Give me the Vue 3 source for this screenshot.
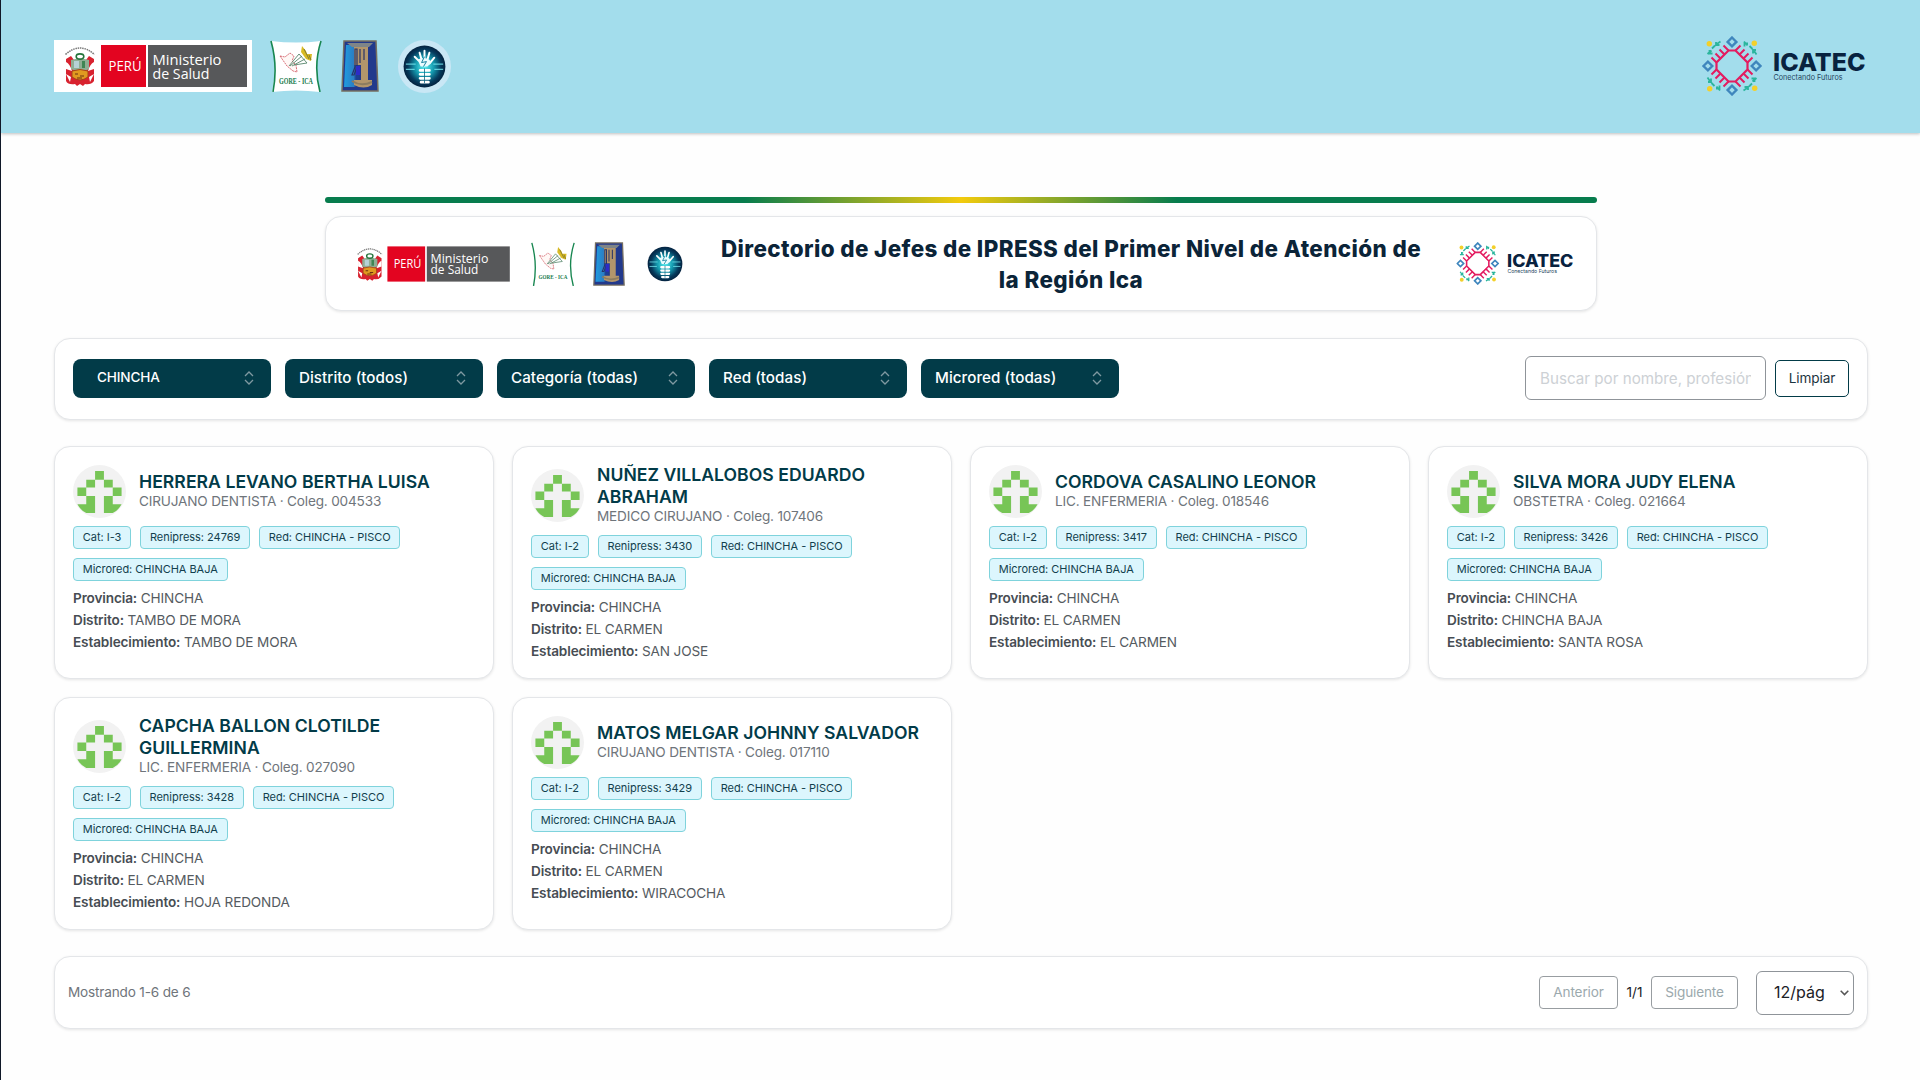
<script setup>
const filters = ['CHINCHA', 'Distrito (todos)', 'Categoría (todas)', 'Red (todas)', 'Microred (todas)']

const people = [
  { name: 'HERRERA LEVANO BERTHA LUISA', job: 'CIRUJANO DENTISTA', coleg: '004533', cat: 'I-3', code: '24769', district: 'TAMBO DE MORA', place: 'TAMBO DE MORA' },
  { name: 'NUÑEZ VILLALOBOS EDUARDO ABRAHAM', job: 'MEDICO CIRUJANO', coleg: '107406', cat: 'I-2', code: '3430', district: 'EL CARMEN', place: 'SAN JOSE' },
  { name: 'CORDOVA CASALINO LEONOR', job: 'LIC. ENFERMERIA', coleg: '018546', cat: 'I-2', code: '3417', district: 'EL CARMEN', place: 'EL CARMEN' },
  { name: 'SILVA MORA JUDY ELENA', job: 'OBSTETRA', coleg: '021664', cat: 'I-2', code: '3426', district: 'CHINCHA BAJA', place: 'SANTA ROSA' },
  { name: 'CAPCHA BALLON CLOTILDE GUILLERMINA', job: 'LIC. ENFERMERIA', coleg: '027090', cat: 'I-2', code: '3428', district: 'EL CARMEN', place: 'HOJA REDONDA' },
  { name: 'MATOS MELGAR JOHNNY SALVADOR', job: 'CIRUJANO DENTISTA', coleg: '017110', cat: 'I-2', code: '3429', district: 'EL CARMEN', place: 'WIRACOCHA' },
]

const quarters = [0, 90, 180, 270]
</script>

<template>
  <div class="page">
    <svg class="defs" width="0" height="0" aria-hidden="true">
      <defs>
        <linearGradient id="tumiSide" x1="0" x2="1"><stop offset="0" stop-color="#1f9be0" /><stop offset=".6" stop-color="#2b7fc4" /><stop offset=".75" stop-color="#1d3f94" /></linearGradient>
        <radialGradient id="handGlow" cx=".5" cy=".5" r=".5"><stop offset="0" stop-color="#5ff0f2" /><stop offset=".45" stop-color="#159bb0" /><stop offset=".8" stop-color="#063a5c" /><stop offset="1" stop-color="#04223f" /></radialGradient>
      </defs>

      <symbol id="minsa" viewBox="0 0 198 52">
        <rect width="198" height="52" fill="#fff" />
        <path d="M11.500 14.500Q26 1.500 40.500 14.500" fill="none" stroke="#777" stroke-width="1.500" stroke-dasharray="1.500 .8" />
        <path d="M12 19l5-3 3 4h12l3-4 5 3v22q-3 4-9 3l-2 2-3-2-3 2-2-2q-7 1-9-3z" fill="#d8222f" />
        <path d="M12 22q4 2 6 9l-6-2zM40 22q-4 2-6 9l6-2zM12 34l5 3-1 5zM40 34l-5 3 1 5z" fill="#fff" />
        <path d="M17 20q9-3 18 0v9q-9 5-18 0z" fill="#8fae94" />
        <path d="M20 21h5v7h-5z" fill="#b6d2d6" />
        <path d="M28 21h3v7h-3z" fill="#3f8553" />
        <ellipse cx="26" cy="16.500" rx="3.800" ry="2.600" fill="#fff" stroke="#23743a" stroke-width="1.600" />
        <path d="M18 31q8-3 16 0v6q-8 6-16 0z" fill="#e09a20" stroke="#a8421a" />
        <path d="M21 34h3m2 2h4m-7 2h5" stroke="#6a3210" stroke-width="1.200" />
        <rect x="47" y="5" width="45" height="42" fill="#e30420" />
        <rect x="94" y="5" width="99" height="42" fill="#57585a" />
      </symbol>

      <symbol id="gore" viewBox="0 0 52 52">
        <path d="M1 1Q26 4 51 1Q43 26 50 52Q26 49 2 52Q8 26 1 1z" fill="#fff" />
        <path d="M1 1Q8 26 3 52M51 1Q43 26 50 52" fill="none" stroke="#178650" stroke-width="1.600" />
        <path d="M10 16l5 1 5-4 4 3-2 5 4 4 1 7-4-1-6-5z" fill="#fff8f6" stroke="#d4606a" stroke-width=".9" stroke-dasharray="2 .7" />
        <path d="M19 26l10-12 8 9-13 2M20 26l12-10M22 26l13-7" fill="none" stroke="#55856a" stroke-width=".9" />
        <path d="M31 12l1-6 4 5 1 3 5 0-1 7-5-2z" fill="#d9bb25" />
        <path d="M34 9l5 10M39 15l2 5" stroke="#77722d" stroke-width=".9" />
      </symbol>

      <symbol id="tumi" viewBox="0 0 38 52">
        <path d="M3 1h32l2 50H1z" fill="#22398c" stroke="#776f60" stroke-width="1.500" />
        <path d="M5 5h14l-1 42H3z" fill="url(#tumiSide)" />
        <path d="M6 3h26l-4 4H11z" fill="#7f8588" />
        <path d="M13 7h14v33h4v5q-8 5-18 0v-5h7V25h-7z" fill="#b3966b" />
        <path d="M14 9h2v18l-3 8h-2l3-8zM19 9v14M23 9v11" fill="none" stroke="#283467" stroke-width="1.200" />
        <path d="M15 26h4v9h-4z" fill="#2d2bc7" />
        <path d="M11 41q9 6 20 1" fill="none" stroke="#8c7c60" stroke-width="2" />
      </symbol>

      <symbol id="hand" viewBox="0 0 54 54">
        <circle cx="27" cy="27" r="21.300" fill="url(#handGlow)" />
        <path d="M8 24.500h10m18 0h10M8 30h9m20 0h9" stroke="#75e5ee" stroke-width="1.200" opacity=".8" />
        <path d="M21 21l-4-4M24 20l-2-7M27 20V11M30 20l2-7M32 24l5-6" fill="none" stroke="#fff" stroke-width="2" stroke-linecap="round" />
        <path d="M20 20q6-3 12 0l2 3-4 4h-7z" fill="#eafcff" />
        <path d="M27 17l-3 6 5-1-3 5" fill="none" stroke="#127f9d" />
        <path d="M22.500 31h9.500M22.500 35h9.500M22.500 39h9.500M23.500 43h7.500" stroke="#fff" stroke-width="2.800" stroke-linecap="round" />
        <path d="M27 29v15" stroke="#0b6381" stroke-width=".8" />
      </symbol>

      <symbol id="rosette" viewBox="0 0 60 60">
        <path d="M26.500 14.500h7l12 12v7l-12 12h-7l-12-12v-7z" fill="none" stroke="#e31c60" stroke-width="2.200" />
        <g v-for="q in quarters" :key="q" :transform="`rotate(${q} 30 30)`">
          <path d="M26.500 14.500l-5-5M22.500 18.500l-5-5M18.500 22.500l-5-5M14.500 26.500l-5-5" fill="none" stroke="#e31c60" stroke-width="2" />
          <path d="M30 1.500l4.400 4.400-4.400 4.400-4.400-4.400z" fill="none" stroke="#3f86bd" stroke-width="2.400" />
          <path d="M5.500 18l4-3.500M10 12.500l3-3M14 8.500L18.500 5.500M7.500 14v3.500h3M14 6v3h3.500" fill="none" stroke="#2bb59d" stroke-width="1.800" />
          <circle cx="7.300" cy="7.700" r="2.700" fill="#f3d02b" />
        </g>
      </symbol>

      <symbol id="identicon" viewBox="0 0 54 54">
        <circle cx="27" cy="27" r="27" fill="#f2f2f2" />
        <path d="M22.500 6h9v9h-9zM13.500 15h9v8h-9zM31.500 15h9v8h-9zM4.500 23h9v8.500h-9zM40.500 23h9v8.500h-9zM13.500 31.500h9V49h-9q-6-3-9-9h9zM31.500 31.500h9V40h9q-3 6-9 9h-9z" fill="#77c556" />
      </symbol>
    </svg>

    <header class="topbar">
      <div class="logos">
        <svg class="l-minsa" viewBox="0 0 198 52">
          <use href="#minsa" />
          <text class="sans" x="54.500" y="31" textLength="33" lengthAdjust="spacingAndGlyphs">PERÚ</text>
          <text class="sans" x="98.500" y="25" textLength="69" lengthAdjust="spacingAndGlyphs">Ministerio</text>
          <text class="sans" x="98.500" y="38.500" textLength="57" lengthAdjust="spacingAndGlyphs">de Salud</text>
        </svg>
        <svg class="l-gore" viewBox="0 0 52 52">
          <use href="#gore" />
          <text class="gore-name" x="9" y="43.500" textLength="34" lengthAdjust="spacingAndGlyphs">GORE - ICA</text>
        </svg>
        <svg class="l-tumi"><use href="#tumi" /></svg>
        <svg class="l-hand"><use href="#hand" /></svg>
      </div>
      <svg class="l-icatec" viewBox="0 0 164 60">
        <use href="#rosette" width="60" height="60" />
        <text class="brand" x="71" y="34.500" textLength="92.500" lengthAdjust="spacingAndGlyphs">ICATEC</text>
        <text class="tagline" x="71.500" y="43.700" textLength="69" lengthAdjust="spacingAndGlyphs">Conectando Futuros</text>
      </svg>
    </header>

    <main>
      <div class="stripe"></div>
      <section class="panel banner">
        <div class="logos small">
          <svg class="l-minsa" viewBox="0 0 198 52">
            <use href="#minsa" />
            <text class="sans" x="54.500" y="31" textLength="33" lengthAdjust="spacingAndGlyphs">PERÚ</text>
            <text class="sans" x="98.500" y="25" textLength="69" lengthAdjust="spacingAndGlyphs">Ministerio</text>
            <text class="sans" x="98.500" y="38.500" textLength="57" lengthAdjust="spacingAndGlyphs">de Salud</text>
          </svg>
          <svg class="l-gore" viewBox="0 0 52 52">
            <use href="#gore" />
            <text class="gore-name" x="9" y="43.500" textLength="34" lengthAdjust="spacingAndGlyphs">GORE - ICA</text>
          </svg>
          <svg class="l-tumi"><use href="#tumi" /></svg>
          <svg class="l-hand"><use href="#hand" /></svg>
        </div>
        <h1>Directorio de Jefes de IPRESS del Primer Nivel de Atención de la Región Ica</h1>
        <svg class="l-icatec" viewBox="0 0 164 60">
          <use href="#rosette" width="60" height="60" />
          <text class="brand" x="71" y="34.500" textLength="92.500" lengthAdjust="spacingAndGlyphs">ICATEC</text>
          <text class="tagline" x="71.500" y="43.700" textLength="69" lengthAdjust="spacingAndGlyphs">Conectando Futuros</text>
        </svg>
      </section>

      <section class="panel filters">
        <div class="selects">
          <button v-for="(f, i) in filters" :key="f" class="select" :class="{ chosen: i === 0 }">
            <span>{{ f }}</span>
            <svg width="10" height="14" viewBox="0 0 10 14" fill="none" stroke="#7f99a1" stroke-width="1.300"><path d="M1 5l4-4 4 4M1 9l4 4 4-4" /></svg>
          </button>
        </div>
        <div class="search">
          <input type="text" placeholder="Buscar por nombre, profesión…" />
          <button class="clear">Limpiar</button>
        </div>
      </section>

      <section class="grid">
        <article v-for="p in people" :key="p.name" class="panel card">
          <div class="head">
            <svg class="avatar"><use href="#identicon" /></svg>
            <div class="who">
              <h2>{{ p.name }}</h2>
              <div class="job">{{ p.job }} · Coleg. {{ p.coleg }}</div>
            </div>
          </div>
          <div class="badges">
            <span>Cat: {{ p.cat }}</span>
            <span>Renipress: {{ p.code }}</span>
            <span>Red: CHINCHA - PISCO</span>
            <span>Microred: CHINCHA BAJA</span>
          </div>
          <div class="facts">
            <div><b>Provincia:</b> CHINCHA</div>
            <div><b>Distrito:</b> {{ p.district }}</div>
            <div><b>Establecimiento:</b> {{ p.place }}</div>
          </div>
        </article>
      </section>

      <footer class="panel pager">
        <span class="count">Mostrando 1-6 de 6</span>
        <div class="controls">
          <button class="step prev">Anterior</button>
          <span class="pos">1/1</span>
          <button class="step next">Siguiente</button>
          <button class="size">
            <span>12/pág</span>
            <svg width="9" height="6" viewBox="0 0 9 6" fill="none" stroke="#555" stroke-width="1.500"><path d="M.7.8l3.800 3.800L8.300.8" /></svg>
          </button>
        </div>
      </footer>
    </main>
  </div>
</template>

<style>
body { background: #fefefe; }
</style>

<style scoped>
* { box-sizing: border-box; }
.page {
  width: 1920px;
  height: 1080px;
  overflow: hidden;
  border-left: 1px solid #101828;
  background: #fefefe;
  font-family: Inter, "Liberation Sans", sans-serif;
  color: #1b2126;
}
.defs { display: block; position: absolute; }
svg { display: block; flex: none; }
button, input { font-family: inherit; margin: 0; }
.sans { font-family: "Open Sans", sans-serif; font-size: 15px; fill: #fff; }
.gore-name { font-family: "Liberation Serif", serif; font-weight: 700; font-size: 7.500px; fill: #167a4b; }
.brand { font-weight: 800; font-size: 24px; fill: #08223f; }
.tagline { font-size: 7.500px; fill: #234560; }
.topbar {
  height: 133px;
  padding: 0 53px 1px;
  display: flex;
  justify-content: space-between;
  align-items: center;
  background: #a3ddec;
  box-shadow: 0 1px 3px rgba(0, 0, 0, .25);
}
.logos { display: flex; align-items: center; gap: 19px; }
.l-minsa { width: 198px; height: 52px; }
.l-gore { width: 52px; height: 52px; margin-left: -1px; }
.l-tumi { width: 38px; height: 52px; }
.l-hand { width: 53px; height: 53px; border-radius: 50%; background: #c9e7f5; }
.topbar .l-icatec { width: 164px; height: 60px; margin-right: 1px; }

.small { gap: 18px; }
.small .l-minsa { width: 166px; height: 44px; }
.small .l-gore { width: 44px; height: 44px; }
.small .l-tumi { width: 32px; height: 44px; }
.small .l-hand { width: 44px; height: 44px; background: none; }

main { padding: 64px 52px 0 53px; }
.stripe {
  width: 1272px;
  height: 6px;
  margin: 0 auto;
  border-radius: 3px;
  background: linear-gradient(90deg, #077c4d 0%, #077c4d 33%, #f3cb0d 50%, #077c4d 67%, #077c4d 100%);
}
.panel {
  background: #fff;
  border: 1px solid #e4e6e9;
  border-radius: 16px;
  box-shadow: 0 1px 3px rgba(0, 0, 0, .1);
}
.banner {
  width: 1272px;
  height: 95px;
  margin: 13px auto 0;
  padding: 0 22px;
  display: flex;
  align-items: center;
}
.banner h1 {
  flex: 1;
  margin: 0;
  padding: 0 28px 0 27px;
  text-align: center;
  font-size: 22.400px;
  line-height: 31px;
  letter-spacing: .4px;
  font-weight: 800;
  color: #0b2438;
}
.banner .l-icatec { width: 118px; height: 43px; }

.filters {
  height: 82px;
  margin-top: 27px;
  padding: 0 18px 2px;
  display: flex;
  align-items: center;
  justify-content: space-between;
}
.selects { display: flex; gap: 14px; }
.select {
  width: 198px;
  height: 39px;
  padding: 0 17px 0 14px;
  display: flex;
  align-items: center;
  justify-content: space-between;
  border: 0;
  border-radius: 8px;
  background: #023b48;
  color: #fff;
  font-size: 15.200px;
  letter-spacing: .04px;
  font-weight: 500;
}
.select span { padding-bottom: 2px; }
.select.chosen { padding-left: 24px; font-size: 13.600px; letter-spacing: -.15px; }
.search { display: flex; align-items: center; gap: 9px; }
.search input {
  width: 241px;
  height: 44px;
  padding: 0 14px;
  border: 1px solid #8f9499;
  border-radius: 6px;
  font-size: 15.200px;
  background: #fff;
}
.search input::placeholder { color: #cdd1d5; opacity: 1; }
.clear {
  width: 74px;
  height: 37px;
  padding: 0 0 1px;
  border: 1px solid #023b48;
  border-radius: 5px;
  background: #fff;
  color: #1c3440;
  font-size: 13.600px;
  letter-spacing: -.1px;
}

.grid {
  margin-top: 26px;
  display: grid;
  grid-template-columns: repeat(4, 1fr);
  grid-auto-rows: 233px;
  gap: 18px;
}
.card { padding: 17px 18px; }
.head { display: flex; align-items: center; gap: 13px; min-height: 54px; }
.avatar { width: 53px; height: 53px; }
.who { flex: 1; min-width: 0; }
.who h2 { margin: 0; font-size: 17.600px; line-height: 22px; letter-spacing: .04px; font-weight: 600; color: #023b48; }
.job { padding-bottom: 3px; font-size: 13.600px; line-height: 16px; letter-spacing: -.18px; color: #6f757b; white-space: nowrap; }
.badges { display: flex; flex-wrap: wrap; gap: 9px; margin-top: 8px; }
.badges span {
  height: 23px;
  padding: 0 8.800px;
  line-height: 21px;
  border: 1px solid #7fd3dc;
  border-radius: 4px;
  background: #dcf6fd;
  color: #123f4d;
  font-size: 11px;
  letter-spacing: -.03px;
  font-weight: 400;
}
.facts { margin-top: 6px; font-size: 13.600px; line-height: 22px; letter-spacing: -.13px; color: #555b61; }
.facts b { font-weight: 600; color: #474d53; }

.pager {
  height: 73px;
  margin-top: 26px;
  padding: 0 13px;
  display: flex;
  align-items: center;
  justify-content: space-between;
}
.count { padding-bottom: 2px; font-size: 13.600px; letter-spacing: -.18px; color: #6f757b; }
.controls { display: flex; align-items: center; }
.step {
  height: 33px;
  padding: 0 0 1px;
  border: 1px solid #989da1;
  border-radius: 4px;
  background: #fff;
  color: #9ba9ad;
  font-size: 13.600px;
  letter-spacing: -.15px;
}
.prev { width: 79px; }
.next { width: 87px; }
.pos { width: 33px; padding-bottom: 1px; text-align: center; font-size: 13.600px; }
.size {
  width: 98px;
  height: 44px;
  margin-left: 18px;
  padding: 0 4px 0 17px;
  display: flex;
  align-items: center;
  justify-content: space-between;
  border: 1px solid #8f9499;
  border-radius: 6px;
  background: #fff;
  color: #1b2126;
  font-size: 16px;
}
.size span { padding-bottom: 1px; }
</style>
